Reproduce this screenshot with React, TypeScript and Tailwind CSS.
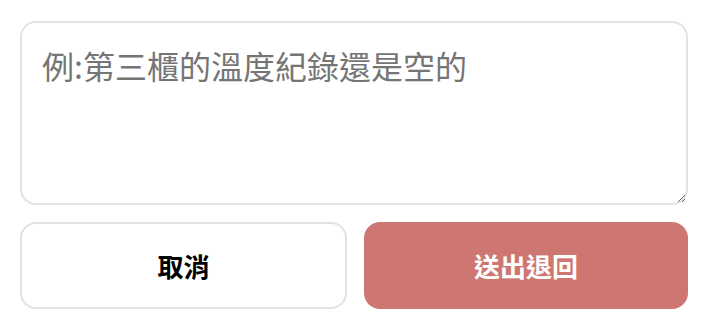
import React from 'react';

export default function App() {
  return (
    <div
      className="w-[708px] h-[328px] bg-white px-5 pt-[21px] flex flex-col gap-[17px]"
      style={{ fontFamily: '"Noto Sans CJK TC", "Noto Sans", sans-serif' }}
    >
      <textarea
        className="w-full h-[184px] border-2 border-[#e2e2e2] rounded-2xl px-5 py-[18px] text-[32px] leading-normal text-[#333] placeholder:text-[#757575] outline-none"
        placeholder="例:第三櫃的溫度紀錄還是空的"
      />
      <div className="flex gap-[17px] h-[87px]">
        <button className="w-[327px] border-2 border-[#e2e2e2] rounded-2xl bg-white text-black text-[26px] font-bold">
          取消
        </button>
        <button className="flex-1 rounded-2xl bg-[#ce7671] text-white text-[26px] font-bold">
          送出退回
        </button>
      </div>
    </div>
  );
}
